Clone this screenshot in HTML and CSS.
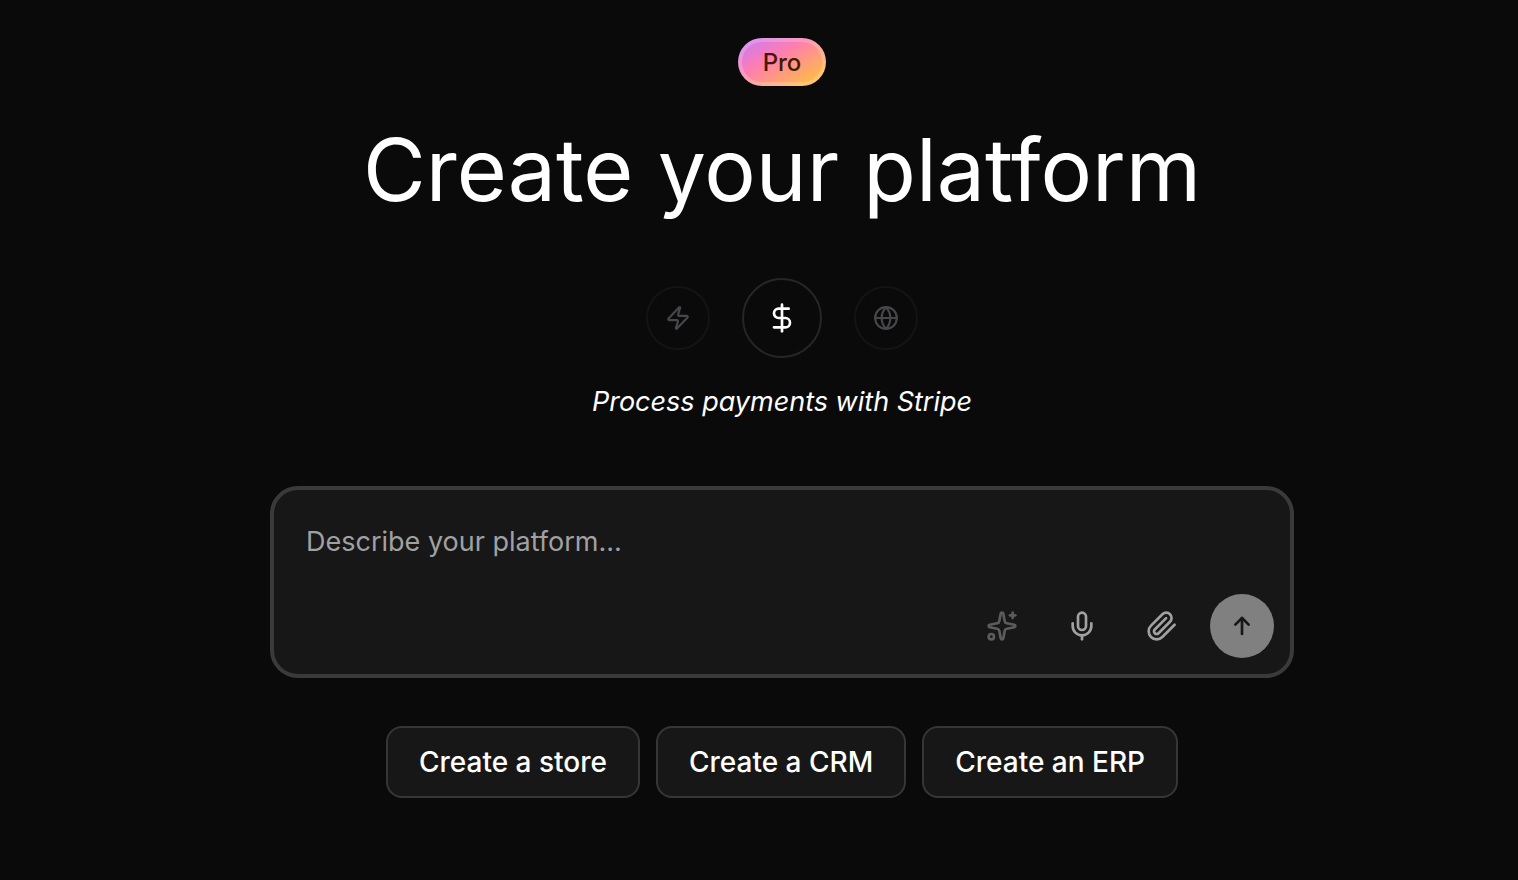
FILE: index.html
```html
<!DOCTYPE html>
<html lang="en">
<head>
    <meta charset="UTF-8">
    <meta name="viewport" content="width=device-width, initial-scale=1.0">
    <title>Create your platform</title>
    <link rel="stylesheet" href="styles.css">
</head>
<body>
    <main class="hero">
        <span class="badge">Pro</span>
        <h1 class="title">Create your platform</h1>

        <div class="features">
            <div class="feature">
                <svg class="icon icon-sm" viewBox="0 0 24 24"><path d="M4 14a1 1 0 0 1-.78-1.63l9.9-10.2a.5.5 0 0 1 .86.46l-1.92 6.02A1 1 0 0 0 13 10h7a1 1 0 0 1 .78 1.63l-9.9 10.2a.5.5 0 0 1-.86-.46l1.92-6.02A1 1 0 0 0 11 14z"/></svg>
            </div>
            <div class="feature active">
                <svg class="icon" viewBox="0 0 24 24"><path d="M12 2v20"/><path d="M17 5H9.500a3.500 3.500 0 0 0 0 7h5a3.500 3.500 0 0 1 0 7H6"/></svg>
            </div>
            <div class="feature">
                <svg class="icon icon-sm" viewBox="0 0 24 24"><circle cx="12" cy="12" r="10"/><path d="M12 2a14.500 14.500 0 0 0 0 20 14.500 14.500 0 0 0 0-20"/><path d="M2 12h20"/></svg>
            </div>
        </div>
        <p class="caption">Process payments with Stripe</p>

        <form class="prompt">
            <textarea class="prompt-input" rows="1" aria-label="Describe your platform" placeholder="Describe your platform..."></textarea>
            <div class="prompt-actions">
                <button type="button" class="action" aria-label="Enhance prompt" disabled>
                    <svg class="icon" viewBox="0 0 24 24"><path d="M11.017 2.814a1 1 0 0 1 1.966 0l1.051 5.558a2 2 0 0 0 1.594 1.594l5.558 1.051a1 1 0 0 1 0 1.966l-5.558 1.051a2 2 0 0 0-1.594 1.594l-1.051 5.558a1 1 0 0 1-1.966 0l-1.051-5.558a2 2 0 0 0-1.594-1.594l-5.558-1.051a1 1 0 0 1 0-1.966l5.558-1.051a2 2 0 0 0 1.594-1.594z"/><path d="M20 2v4"/><path d="M22 4h-4"/><circle cx="4" cy="20" r="2"/></svg>
                </button>
                <button type="button" class="action" aria-label="Dictate">
                    <svg class="icon" viewBox="0 0 24 24"><path d="M12 19v3"/><path d="M19 10v2a7 7 0 0 1-14 0v-2"/><rect x="9" y="2" width="6" height="13" rx="3"/></svg>
                </button>
                <button type="button" class="action" aria-label="Attach file">
                    <svg class="icon" viewBox="0 0 24 24"><path d="m21.440 11.050-9.190 9.190a6 6 0 0 1-8.490-8.490l8.570-8.570A4 4 0 1 1 18 8.840l-8.590 8.570a2 2 0 0 1-2.830-2.830l8.490-8.480"/></svg>
                </button>
                <button type="submit" class="action send" aria-label="Send">
                    <svg class="icon" viewBox="0 0 24 24"><path d="m7 11 5-5 5 5"/><path d="M12 18V6"/></svg>
                </button>
            </div>
        </form>

        <div class="suggestions">
            <button type="button" class="suggestion">Create a store</button>
            <button type="button" class="suggestion">Create a CRM</button>
            <button type="button" class="suggestion">Create an ERP</button>
        </div>
    </main>
</body>
</html>
```
FILE: styles.css
```css
* {
    margin: 0;
    padding: 0;
    box-sizing: border-box;
}

body {
    font-family: Inter, "Liberation Sans", sans-serif;
    background: #0a0a0a;
    color: #fff;
}

button,
textarea {
    font-family: inherit;
}

.hero {
    display: flex;
    flex-direction: column;
    align-items: center;
    padding: 38px 0 82px 46px;
}

.badge {
    height: 48px;
    padding: 0 21px;
    border: 4px solid rgba(255, 255, 255, 0.2);
    border-radius: 24px;
    background: linear-gradient(150deg, #c27aff, #ff7eb0 40%, #ffb84d 85%) border-box;
    color: #461901;
    font-size: 24px;
    font-weight: 500;
    line-height: 42px;
}

.title {
    margin-top: 36px;
    font-size: 86px;
    font-weight: 400;
    line-height: 96px;
}

.features {
    display: flex;
    align-items: center;
    gap: 32px;
    margin-top: 60px;
}

.feature {
    display: flex;
    align-items: center;
    justify-content: center;
    width: 64px;
    height: 64px;
    border: 2px solid #141414;
    border-radius: 50%;
    color: #46464b;
}

.feature.active {
    width: 80px;
    height: 80px;
    border-color: #262626;
    color: #fff;
}

.icon {
    width: 32px;
    height: 32px;
    fill: none;
    stroke: currentColor;
    stroke-width: 2;
    stroke-linecap: round;
    stroke-linejoin: round;
}

.icon-sm {
    width: 26px;
    height: 26px;
}

.caption {
    margin-top: 24px;
    font-size: 27px;
    font-style: italic;
    line-height: 40px;
}

.prompt {
    width: 100%;
    max-width: 1024px;
    margin-top: 64px;
    padding: 16px;
    border: 4px solid #3a3a3a;
    border-radius: 28px;
    background: #171717;
}

.prompt-input {
    display: block;
    width: 100%;
    height: 72px;
    padding: 16px;
    border: none;
    outline: none;
    resize: none;
    background: transparent;
    color: #fff;
    font-size: 27px;
    line-height: 40px;
}

.prompt-input::placeholder {
    color: #a1a1a1;
}

.prompt-actions {
    display: flex;
    justify-content: flex-end;
    gap: 16px;
    margin-top: 16px;
}

.action {
    display: flex;
    align-items: center;
    justify-content: center;
    width: 64px;
    height: 64px;
    border: none;
    border-radius: 50%;
    background: transparent;
    color: #a1a1a1;
    cursor: pointer;
}

.action:disabled {
    color: #5c5c5c;
    cursor: default;
}

.send {
    background: #808080;
    color: #171717;
}

.suggestions {
    display: flex;
    flex-wrap: wrap;
    justify-content: center;
    gap: 16px;
    margin-top: 48px;
}

.suggestion {
    height: 72px;
    padding: 0 31px;
    border: 2px solid #363636;
    border-radius: 16px;
    background: #171717;
    color: #fff;
    font-size: 28px;
    font-weight: 500;
    cursor: pointer;
}
```
